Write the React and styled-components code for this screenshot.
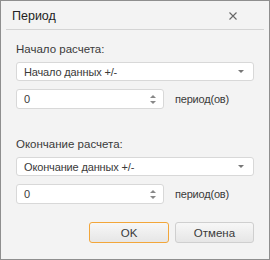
import styled, { createGlobalStyle } from "styled-components";

const GlobalStyle = createGlobalStyle`
  html, body {
    margin: 0;
    padding: 0;
    background: #ffffff;
  }
  body {
    font-family: "Liberation Sans", Arial, sans-serif;
  }
`;

const DialogWindow = styled.div`
  box-sizing: border-box;
  width: 270px;
  height: 260px;
  border: 1px solid #8e8e8e;
  background: #f3f3f3;
  display: flex;
  flex-direction: column;
`;

const TitleBar = styled.div`
  height: 28px;
  display: flex;
  align-items: center;
  justify-content: space-between;
  margin: 0 5px;
  border-bottom: 1px solid #d4d4d4;
  padding-left: 6px;
  padding-right: 27px;
`;

const Title = styled.span`
  font-size: 12.5px;
  color: #222;
  margin-top: 2px;
`;

const CloseIcon = styled.svg`
  width: 8px;
  height: 8px;
  margin-top: 2px;
`;

const Body = styled.div`
  padding: 12px 15px 0 15px;
  display: flex;
  flex-direction: column;
`;

const Section = styled.div`
  display: flex;
  flex-direction: column;
  margin-bottom: ${(p) => p.$gapAfter || 0}px;
`;

const Label = styled.div`
  font-size: 11.5px;
  line-height: 14px;
  color: #3a3a3a;
  margin-bottom: 6px;
`;

const SelectBox = styled.div`
  box-sizing: border-box;
  height: 19px;
  display: flex;
  align-items: center;
  justify-content: space-between;
  padding: 0 9px 0 7px;
  background: #fff;
  border: 1px solid #d8d8d8;
  border-radius: 3px;
  font-size: 11px;
  letter-spacing: -0.15px;
  color: #3a3a3a;
`;

const Caret = styled.span`
  width: 0;
  height: 0;
  border-left: 3px solid transparent;
  border-right: 3px solid transparent;
  border-top: 3px solid #777;
`;

const SpinRow = styled.div`
  display: flex;
  align-items: center;
  gap: 11px;
  margin-top: 8px;
`;

const SpinBox = styled.div`
  box-sizing: border-box;
  width: 148px;
  height: 20px;
  display: flex;
  align-items: center;
  justify-content: space-between;
  padding: 0 7px 0 7px;
  background: #fff;
  border: 1px solid #d8d8d8;
  border-radius: 3px;
  font-size: 11px;
  color: #3a3a3a;
`;

const Arrows = styled.div`
  display: flex;
  flex-direction: column;
  gap: 3px;
`;

const Arrow = styled.span`
  width: 0;
  height: 0;
  border-left: 3px solid transparent;
  border-right: 3px solid transparent;
  ${(p) =>
    p.$up
      ? "border-bottom: 3px solid #888;"
      : "border-top: 3px solid #888;"}
`;

const Unit = styled.span`
  font-size: 11px;
  letter-spacing: -0.2px;
  color: #3a3a3a;
`;

const Footer = styled.div`
  display: flex;
  justify-content: flex-end;
  gap: 6px;
  padding: 18px 15px 0 15px;
`;

const Button = styled.button`
  box-sizing: border-box;
  width: ${(p) => p.$w}px;
  height: 21px;
  font-family: "Liberation Sans", Arial, sans-serif;
  font-size: 11.5px;
  color: #3a3a3a;
  border-radius: 3px;
  border: 1px solid ${(p) => (p.$primary ? "#f2a63a" : "#cfcfcf")};
  background: linear-gradient(#f7f7f7, #e6e6e6);
  padding: 0;
`;

function Spinner() {
  return (
    <SpinRow>
      <SpinBox>
        <span>0</span>
        <Arrows>
          <Arrow $up />
          <Arrow />
        </Arrows>
      </SpinBox>
      <Unit>период(ов)</Unit>
    </SpinRow>
  );
}

export default function App() {
  return (
    <>
      <GlobalStyle />
      <DialogWindow>
        <TitleBar>
          <Title>Период</Title>
          <CloseIcon viewBox="0 0 8 8">
            <path d="M0.5 0.5 L7.5 7.5 M7.5 0.5 L0.5 7.5" stroke="#666" strokeWidth="1.1" />
          </CloseIcon>
        </TitleBar>
        <Body>
          <Section $gapAfter={28}>
            <Label>Начало расчета:</Label>
            <SelectBox>
              <span>Начало данных +/-</span>
              <Caret />
            </SelectBox>
            <Spinner />
          </Section>
          <Section>
            <Label>Окончание расчета:</Label>
            <SelectBox>
              <span>Окончание данных +/-</span>
              <Caret />
            </SelectBox>
            <Spinner />
          </Section>
        </Body>
        <Footer>
          <Button $primary $w={80}>OK</Button>
          <Button $w={79}>Отмена</Button>
        </Footer>
      </DialogWindow>
    </>
  );
}
